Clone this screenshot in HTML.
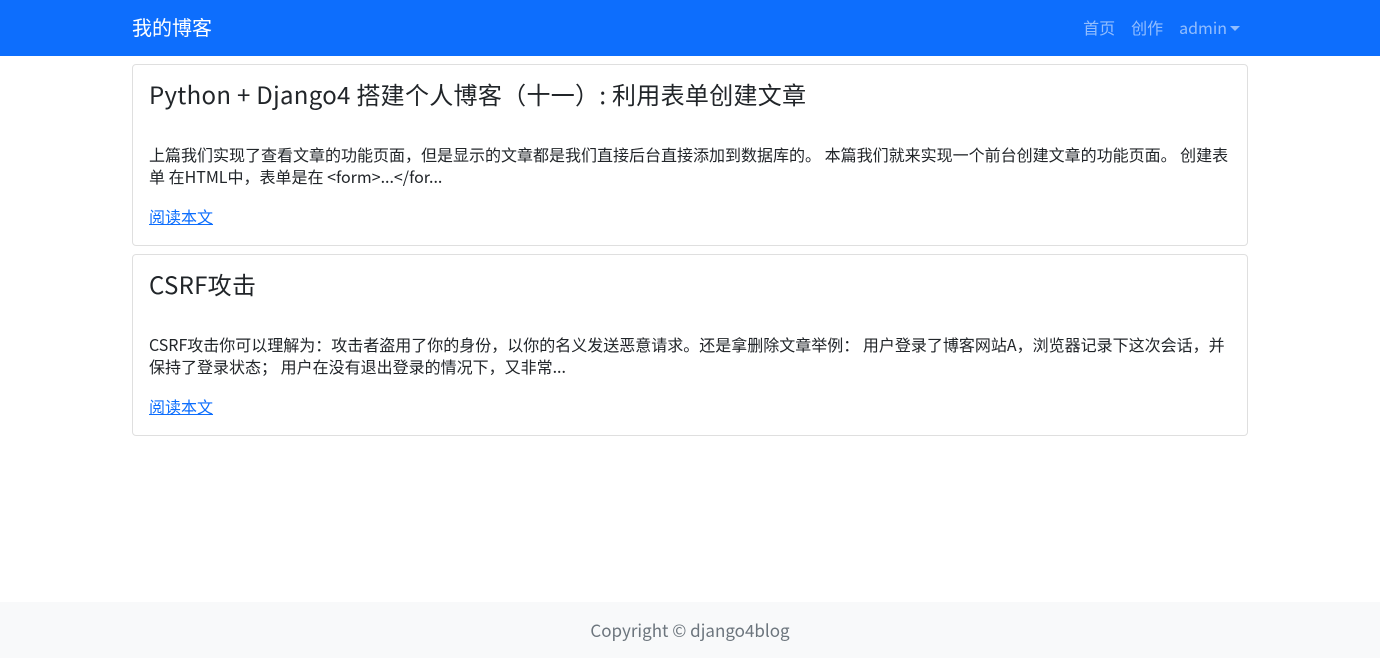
<!DOCTYPE html>
<html><head><meta charset="utf-8"><style>
*{box-sizing:border-box;margin:0;padding:0}
body{width:1380px;height:658px;position:relative;background:#fff;font-family:"Noto Sans CJK SC","Liberation Sans",sans-serif;color:#212529;overflow:hidden}
.nav{height:56px;background:#0d6efd;position:relative}
.brand{position:absolute;left:132px;top:13px;font-size:20px;color:#fff;line-height:28px}
.links{position:absolute;right:140px;top:15px;font-size:16px;color:rgba(255,255,255,.55);line-height:24px}
.links span{margin-left:16px}
.caret{display:inline-block;width:0;height:0;border-left:5px solid transparent;border-right:5px solid transparent;border-top:5px solid rgba(255,255,255,.55);vertical-align:3px;margin-left:3px}
.card{position:absolute;left:132px;width:1116px;border:1px solid rgba(0,0,0,.125);border-radius:4px;padding:16px}
.card h3{font-weight:400;font-size:24px;line-height:30px;margin-top:-2px;margin-bottom:34px;letter-spacing:0.3px}
.card p{font-size:16px;line-height:22px;margin-bottom:18px}
.card a{display:block;width:max-content;font-size:16px;color:#0d6efd;text-decoration:underline;line-height:22px}
.foot{position:absolute;left:0;top:602px;width:1380px;height:56px;background:#f8f9fa;text-align:center;color:#6c757d;font-size:17px;line-height:56px}
</style></head><body>
<div class="nav"><div class="brand">我的博客</div><div class="links"><span>首页</span><span>创作</span><span>admin<i class="caret"></i></span></div></div>
<div class="card" style="top:64px;height:182px"><h3>Python + Django4 搭建个人博客（十一）: 利用表单创建文章</h3><p>上篇我们实现了查看文章的功能页面，但是显示的文章都是我们直接后台直接添加到数据库的。 本篇我们就来实现一个前台创建文章的功能页面。 创建表单 在HTML中，表单是在 &lt;form&gt;...&lt;/for...</p><a>阅读本文</a></div>
<div class="card" style="top:254px;height:182px"><h3>CSRF攻击</h3><p>CSRF攻击你可以理解为：攻击者盗用了你的身份，以你的名义发送恶意请求。还是拿删除文章举例： 用户登录了博客网站A，浏览器记录下这次会话，并保持了登录状态； 用户在没有退出登录的情况下，又非常...</p><a>阅读本文</a></div>
<div class="foot">Copyright © django4blog</div>
</body></html>
